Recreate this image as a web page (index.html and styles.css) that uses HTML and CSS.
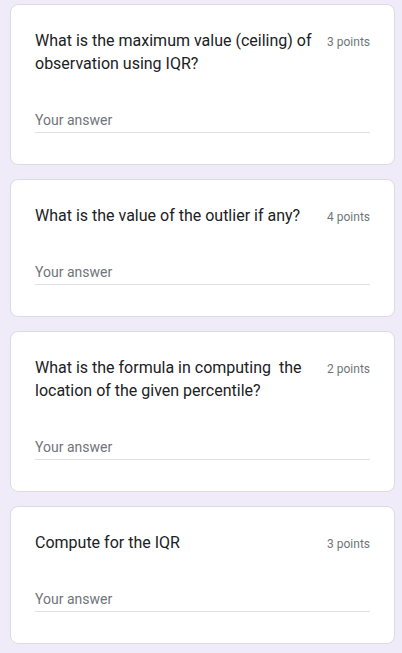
FILE: index.html
```html
<!DOCTYPE html>
<html lang="en">
<head>
<meta charset="utf-8">
<title>Form</title>
<link rel="stylesheet" href="styles.css">
</head>
<body>
<main class="form">
  <section class="card">
    <div class="card-head">
      <div class="question">What is the maximum value (ceiling) of observation using IQR?</div>
      <div class="points">3 points</div>
    </div>
    <div class="answer">Your answer</div>
  </section>
  <section class="card">
    <div class="card-head">
      <div class="question">What is the value of the outlier if any?</div>
      <div class="points">4 points</div>
    </div>
    <div class="answer">Your answer</div>
  </section>
  <section class="card">
    <div class="card-head">
      <div class="question">What is the formula in computing&nbsp; the location of the given percentile?</div>
      <div class="points">2 points</div>
    </div>
    <div class="answer">Your answer</div>
  </section>
  <section class="card">
    <div class="card-head">
      <div class="question">Compute for the IQR</div>
      <div class="points">3 points</div>
    </div>
    <div class="answer">Your answer</div>
  </section>
</main>
</body>
</html>
```
FILE: styles.css
```css
html, body {
  margin: 0;
  padding: 0;
  background: #f0ebf8;
  font-family: Roboto, "Liberation Sans", Arial, sans-serif;
}

.form {
  display: flex;
  flex-direction: column;
  gap: 14px;
  padding: 4px 7px 0 10px;
}

.card {
  background: #ffffff;
  border: 1px solid #dadce0;
  border-radius: 8px;
  padding: 24px;
}

.card-head {
  display: flex;
  align-items: baseline;
  gap: 8px;
}

.question {
  flex: 1;
  font-size: 16px;
  line-height: 23px;
  color: #202124;
}

.points {
  flex: none;
  font-size: 12px;
  line-height: 16px;
  color: #70757a;
}

.answer {
  margin-top: 35px;
  margin-bottom: 7px;
  font-size: 14px;
  line-height: 20px;
  padding-bottom: 2px;
  color: #70757a;
  border-bottom: 1px solid #e0e0e0;
}
```
